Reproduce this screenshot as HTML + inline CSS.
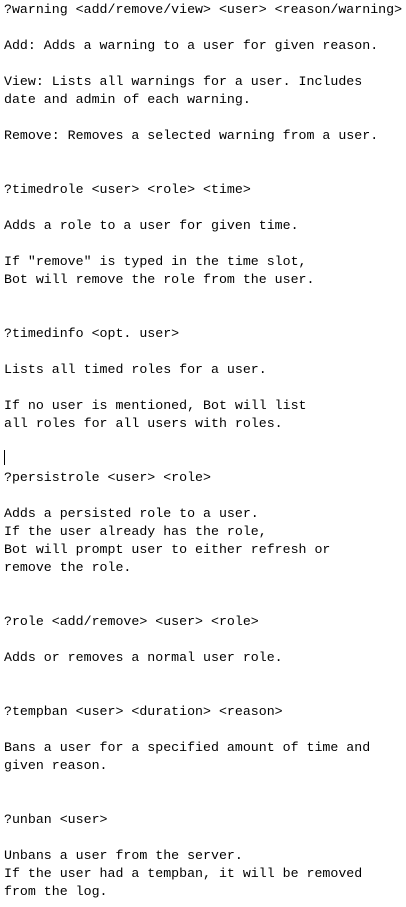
<!DOCTYPE html>
<html><head><meta charset="utf-8"><style>
html,body{margin:0;padding:0;background:#fff;width:406px;height:907px;overflow:hidden}
pre{margin:0;position:absolute;left:4px;top:1px;font-family:"Liberation Mono",monospace;font-size:13.27px;line-height:18px;color:#000;white-space:pre}
.cur{position:absolute;left:4px;top:450px;width:1px;height:15px;background:#000}
</style></head><body>
<pre>?warning &lt;add/remove/view&gt; &lt;user&gt; &lt;reason/warning&gt;

Add: Adds a warning to a user for given reason.

View: Lists all warnings for a user. Includes
date and admin of each warning.

Remove: Removes a selected warning from a user.


?timedrole &lt;user&gt; &lt;role&gt; &lt;time&gt;

Adds a role to a user for given time.

If "remove" is typed in the time slot,
Bot will remove the role from the user.


?timedinfo &lt;opt. user&gt;

Lists all timed roles for a user.

If no user is mentioned, Bot will list
all roles for all users with roles.


?persistrole &lt;user&gt; &lt;role&gt;

Adds a persisted role to a user.
If the user already has the role,
Bot will prompt user to either refresh or
remove the role.


?role &lt;add/remove&gt; &lt;user&gt; &lt;role&gt;

Adds or removes a normal user role.


?tempban &lt;user&gt; &lt;duration&gt; &lt;reason&gt;

Bans a user for a specified amount of time and
given reason.


?unban &lt;user&gt;

Unbans a user from the server.
If the user had a tempban, it will be removed
from the log.</pre>
<div class="cur"></div>
</body></html>
